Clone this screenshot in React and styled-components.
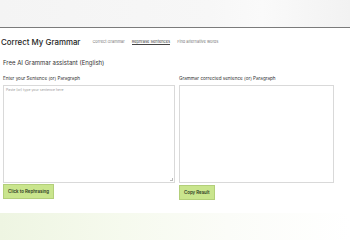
import React from "react";
import styled, { createGlobalStyle } from "styled-components";

const Global = createGlobalStyle`
  html, body { margin: 0; padding: 0; background: #fff; }
  body { font-family: Inter, "Noto Sans", sans-serif; color: #222; }
  * { box-sizing: border-box; }
`;

const Page = styled.div`
  width: 350px;
  height: 240px;
  overflow: hidden;
  display: flex;
  flex-direction: column;
`;

const TopBand = styled.div`
  height: 28px;
  flex-shrink: 0;
  background: linear-gradient(90deg, #f4f4f4 0%, #f7f7f7 60%, #fafafa 75%, #f2f2f2 100%);
  border-bottom: 1px solid #7b7b7b;
`;

const NavBar = styled.div`
  display: flex;
  align-items: center;
  padding: 0 0 0 1px;
  margin-top: 9px;
  height: 10px;
`;

const Brand = styled.div`
  font-size: 7.9px;
  font-weight: 500;
  color: #1e1e1e;
  margin-right: 12px;
  white-space: nowrap;
`;

const NavLink = styled.span`
  font-size: 3.95px;
  color: ${p => (p.active ? "#333" : "#777")};
  margin-right: 7px;
  white-space: nowrap;
  border-bottom: ${p => (p.active ? "0.6px solid #444" : "none")};
  padding-bottom: 0.5px;
`;

const Main = styled.div`
  padding: 0 3px;
  display: flex;
  flex-direction: column;
`;

const Heading = styled.div`
  font-size: 6px;
  font-weight: 400;
  color: #333;
  margin-top: 12px;
  height: 8px;
  white-space: nowrap;
`;

const Columns = styled.div`
  display: flex;
  gap: 4px;
  margin-top: 9px;
`;

const Column = styled.div`
  width: ${p => p.w}px;
  display: flex;
  flex-direction: column;
`;

const Label = styled.div`
  font-size: 4.6px;
  color: #333;
  height: 9px;
  white-space: nowrap;
`;

const Area = styled.div`
  height: 98px;
  border: 1px solid #d9d9d9;
  background: #fff;
  position: relative;
  padding: 2px 2px;
  font-size: 3.5px;
  color: #9a9a9a;
`;

const Grip = styled.div`
  position: absolute;
  right: 1px;
  bottom: 1px;
  width: 3px;
  height: 3px;
  border-right: 1px solid #bbb;
  border-bottom: 1px solid #bbb;
`;

const Button = styled.button`
  align-self: flex-start;
  margin-top: ${p => p.mt || 1}px;
  height: 15px;
  padding: 0 4px;
  background: #c9e58d;
  border: 1px solid #b3cf7a;
  font-family: Inter, "Noto Sans", sans-serif;
  font-size: 4.4px;
  font-weight: 600;
  color: #2d3a1e;
  white-space: nowrap;
  cursor: pointer;
`;

const BottomBand = styled.div`
  margin-top: auto;
  height: 27px;
  flex-shrink: 0;
  background: linear-gradient(90deg, #eef5e2 0%, #f6faee 35%, #fbfcf8 65%, #ffffff 100%);
`;

export default function App() {
  return (
    <Page>
      <Global />
      <TopBand />
      <NavBar>
        <Brand>Correct My Grammar</Brand>
        <NavLink>Correct Grammar</NavLink>
        <NavLink active>Rephrase Sentences</NavLink>
        <NavLink>Find alternative words</NavLink>
      </NavBar>
      <Main>
        <Heading>Free AI Grammar assistant (English)</Heading>
        <Columns>
          <Column w={172}>
            <Label>Enter your Sentence (or) Paragraph</Label>
            <Area>
              Paste (or) type your sentence here
              <Grip />
            </Area>
            <Button mt={1}>Click to Rephrasing</Button>
          </Column>
          <Column w={155}>
            <Label>Grammar corrected sentence (or) Paragraph</Label>
            <Area />
            <Button mt={2}>Copy Result</Button>
          </Column>
        </Columns>
      </Main>
      <BottomBand />
    </Page>
  );
}
